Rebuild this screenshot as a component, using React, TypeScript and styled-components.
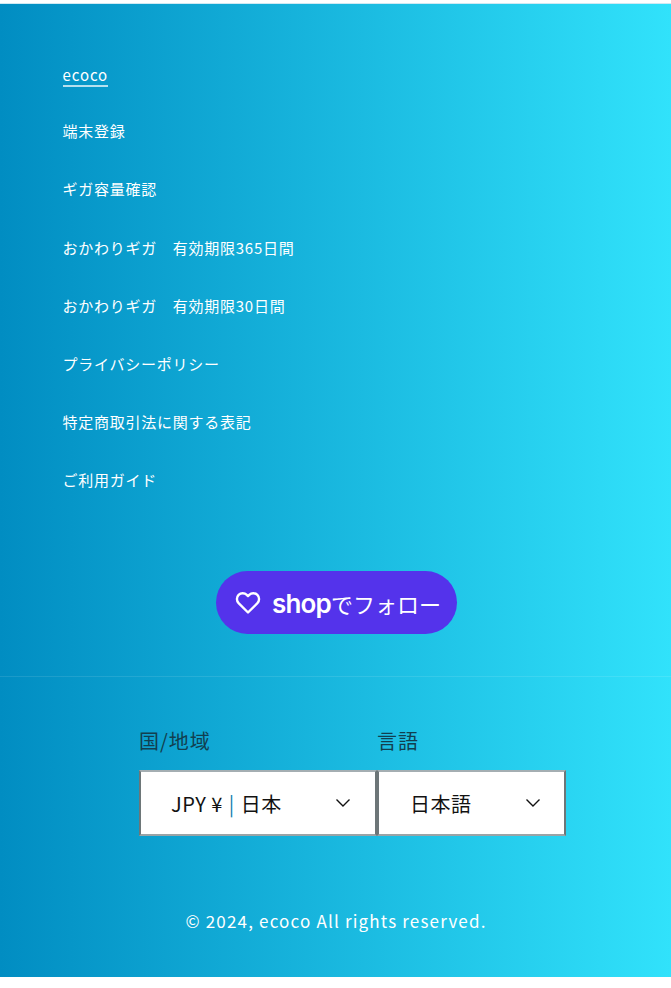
import styled, { createGlobalStyle } from "styled-components";

const GlobalStyle = createGlobalStyle`
  html, body {
    margin: 0;
    padding: 0;
    background: #fff;
  }
  body {
    font-family: "Noto Sans CJK JP", "Noto Sans", sans-serif;
    letter-spacing: 0.6px;
  }
`;

const Footer = styled.footer`
  margin-top: 3px;
  height: 974px;
  border-top: 1px solid #cfe9f3;
  box-sizing: border-box;
  display: flex;
  flex-direction: column;
  background: linear-gradient(90deg, #018dc2 0%, #31e2fb 100%);
`;

const LinkList = styled.ul`
  list-style: none;
  margin: 0;
  padding: 59px 0 0 62.5px;
  display: flex;
  flex-direction: column;
  gap: 37.4px;
`;

const LinkItem = styled.li`
  height: 20.8px;
  line-height: 20.8px;
  font-size: 15px;
  letter-spacing: 0.75px;
  color: #fff;
  white-space: pre;
`;

const ActiveLink = styled.a`
  display: inline-block;
  color: #fff;
  letter-spacing: 0.9px;
  line-height: 24px;
  height: 24px;
  box-sizing: border-box;
  border-bottom: 2px solid rgba(255, 255, 255, 0.7);
`;

const FollowRow = styled.div`
  display: flex;
  justify-content: center;
  margin-top: 80px;
  padding-left: 1px;
`;

const FollowButton = styled.button`
  width: 241px;
  height: 63px;
  border: 0;
  border-radius: 32px;
  background: #5433eb;
  color: #fff;
  display: flex;
  align-items: center;
  justify-content: center;
  gap: 11px;
  padding: 0 0 0 4px;
  font-family: "Noto Sans CJK JP", sans-serif;
  font-size: 22px;
  letter-spacing: 0;
`;

const ShopWord = styled.span`
  font-family: "Inter", sans-serif;
  font-weight: 600;
  font-size: 26px;
  letter-spacing: -0.8px;
`;

const Divider = styled.div`
  height: 1px;
  margin-top: 42px;
  background: rgba(255, 255, 255, 0.1);
`;

const Localization = styled.div`
  display: flex;
  justify-content: center;
  margin-top: 49px;
  padding-left: 34px;
`;

const Field = styled.div<{ $width: number }>`
  width: ${(p) => p.$width}px;
  display: flex;
  flex-direction: column;
`;

const FieldLabel = styled.div`
  height: 30px;
  line-height: 30px;
  font-size: 20px;
  letter-spacing: 1px;
  color: #123f4f;
`;

const Select = styled.div<{ $pad: number; $right: number }>`
  margin-top: 14px;
  height: 66px;
  box-sizing: border-box;
  border: 2px solid #6d7678;
  border-top-color: #a4aeb2;
  border-bottom-color: #9aa3a6;
  background: #fff;
  display: flex;
  align-items: center;
  justify-content: space-between;
  padding: 0 ${(p) => p.$right}px 0 ${(p) => p.$pad}px;
  font-size: 20px;
  letter-spacing: 0.5px;
  color: #121212;
`;

const Sep = styled.span`
  color: #0f7fb0;
  margin: 0 6px;
`;

const Copyright = styled.div`
  margin-top: 72px;
  padding-left: 1px;
  text-align: center;
  font-size: 17px;
  line-height: 26px;
  letter-spacing: 1.17px;
  color: #fff;
`;

const Chevron = () => (
  <svg width="16" height="10" viewBox="0 0 16 10" fill="none">
    <path d="M1.5 1.5 8 8l6.5-6.5" stroke="#121212" strokeWidth="1.4" />
  </svg>
);

const Heart = () => (
  <svg width="26" height="24" viewBox="0 0 26 24" fill="none">
    <path
      d="M13 21.5 3.6 12.2a6 6 0 0 1 0-8.3 5.8 5.8 0 0 1 8.2 0L13 5.1l1.2-1.2a5.8 5.8 0 0 1 8.2 0 6 6 0 0 1 0 8.3Z"
      stroke="#fff"
      strokeWidth="2.4"
      strokeLinejoin="round"
    />
  </svg>
);

const links = [
  "端末登録",
  "ギガ容量確認",
  "おかわりギガ　有効期限365日間",
  "おかわりギガ　有効期限30日間",
  "プライバシーポリシー",
  "特定商取引法に関する表記",
  "ご利用ガイド",
];

export default function App() {
  return (
    <>
      <GlobalStyle />
      <Footer>
        <LinkList>
          <LinkItem>
            <ActiveLink>ecoco</ActiveLink>
          </LinkItem>
          {links.map((link) => (
            <LinkItem key={link}>{link}</LinkItem>
          ))}
        </LinkList>
        <FollowRow>
          <FollowButton>
            <Heart />
            <span>
              <ShopWord>shop</ShopWord>でフォロー
            </span>
          </FollowButton>
        </FollowRow>
        <Divider />
        <Localization>
          <Field $width={238}>
            <FieldLabel>国/地域</FieldLabel>
            <Select $pad={30} $right={24}>
              <span>
                JPY ¥<Sep>|</Sep>日本
              </span>
              <Chevron />
            </Select>
          </Field>
          <Field $width={189}>
            <FieldLabel>言語</FieldLabel>
            <Select $pad={31} $right={23}>
              <span>日本語</span>
              <Chevron />
            </Select>
          </Field>
        </Localization>
        <Copyright>© 2024, ecoco All rights reserved.</Copyright>
      </Footer>
    </>
  );
}
